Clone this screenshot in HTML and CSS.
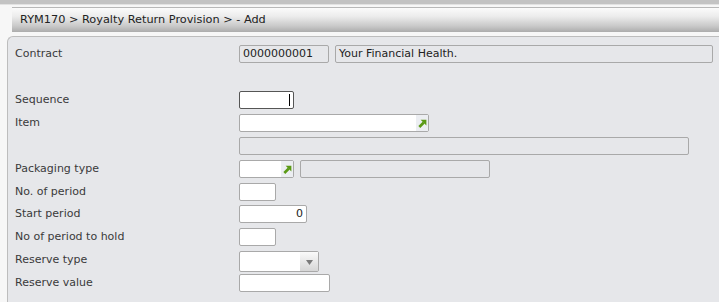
FILE: index.html
```html
<!DOCTYPE html>
<html>
<head>
<meta charset="utf-8">
<link rel="stylesheet" href="styles.css">
</head>
<body>
<div class="topstrip"></div>
<div class="headwrap">
  <div class="header">RYM170 &gt; Royalty Return Provision &gt; - Add</div>
</div>
<div class="panel">
  <div class="row">
    <div class="label">Contract</div>
    <div class="fields">
      <div class="inp dis w90">0000000001</div>
      <div class="inp dis wdesc">Your Financial Health.</div>
    </div>
  </div>
  <div class="row"></div>
  <div class="row">
    <div class="label">Sequence</div>
    <div class="fields"><div class="inp focus w55"><span class="caret"></span></div></div>
  </div>
  <div class="row">
    <div class="label">Item</div>
    <div class="fields">
      <div class="inp w190 lookup"><span class="lk"><svg width="9" height="9" viewBox="0 0 9 9"><path d="M1.3 8 L5.8 3.5" stroke="#5b9a16" stroke-width="2.6"/><path d="M2.6 0.8 H8.4 V6.6 Z" fill="#5b9a16"/></svg></span></div>
    </div>
  </div>
  <div class="row">
    <div class="label"></div>
    <div class="fields"><div class="inp dis w450"></div></div>
  </div>
  <div class="row">
    <div class="label">Packaging type</div>
    <div class="fields">
      <div class="inp w55 lookup"><span class="lk"><svg width="9" height="9" viewBox="0 0 9 9"><path d="M1.3 8 L5.8 3.5" stroke="#5b9a16" stroke-width="2.6"/><path d="M2.6 0.8 H8.4 V6.6 Z" fill="#5b9a16"/></svg></span></div>
      <div class="inp dis w190"></div>
    </div>
  </div>
  <div class="row r22">
    <div class="label">No. of period</div>
    <div class="fields"><div class="inp w37"></div></div>
  </div>
  <div class="row">
    <div class="label">Start period</div>
    <div class="fields"><div class="inp w68 num">0</div></div>
  </div>
  <div class="row">
    <div class="label">No of period to hold</div>
    <div class="fields"><div class="inp w37"></div></div>
  </div>
  <div class="row">
    <div class="label">Reserve type</div>
    <div class="fields"><div class="inp sel w80"><span class="dd"><svg width="7" height="5" viewBox="0 0 7 5"><path d="M0 0 H7 L3.5 5 Z" fill="#7a7a7a"/></svg></span></div></div>
  </div>
  <div class="row">
    <div class="label">Reserve value</div>
    <div class="fields"><div class="inp w91"></div></div>
  </div>
</div>
</body>
</html>
```

FILE: styles.css
```css
html, body {
  margin: 0;
  padding: 0;
  background: #f7f7f7;
  width: 719px;
  height: 302px;
  overflow: hidden;
  font-family: "DejaVu Sans", sans-serif;
  color: #333;
}
.topstrip {
  height: 4px;
  background: #c3c3c3;
  border-bottom: 1px solid #e2e2e2;
}
.headwrap {
  padding: 2px 0 4px 12px;
}
.header {
  height: 25px;
  box-sizing: border-box;
  border-top: 1px solid #b8b8b8;
  background: linear-gradient(#fbfbfb 0%, #ececec 35%, #c9c9c9 75%, #acacac 100%);
  font-size: 11.3px;
  line-height: 24px;
  padding-left: 8px;
  color: #222;
}
.panel {
  margin-left: 7px;
  border-top: 1px solid #bdbdbd;
  border-left: 1px solid #bdbdbd;
  border-top-left-radius: 6px;
  background: #e6e7ea;
  height: 270px;
  padding: 8px 0 0 7px;
  box-sizing: border-box;
}
.row {
  display: flex;
  height: 23px;
}
.row.r22 { height: 22px; }
.label {
  width: 224px;
  flex: none;
  font-size: 11px;
  padding-top: 2px;
  color: #3a3a3a;
}
.fields {
  display: flex;
  gap: 6px;
}
.inp {
  box-sizing: border-box;
  height: 18px;
  border: 1px solid #a9a9a9;
  border-radius: 2px;
  background: #fff;
  font-size: 11px;
  line-height: 16px;
  padding: 0 3px;
  position: relative;
  color: #222;
}
.inp.dis { background: #e6e7ea; }
.inp.focus { border-color: #555; }
.caret {
  position: absolute;
  right: 3px;
  top: 2px;
  width: 1px;
  height: 12px;
  background: #000;
}
.w90 { width: 90px; }
.wdesc { width: 378px; }
.w55 { width: 55px; }
.w190 { width: 190px; }
.w450 { width: 450px; }
.w37 { width: 37px; }
.w68 { width: 68px; }
.w80 { width: 80px; height: 21px; }
.w91 { width: 91px; }
.num { text-align: right; }
.lk {
  position: absolute;
  right: 0;
  top: 0;
  bottom: 0;
  width: 12px;
  background: #eceef2;
  display: flex;
  align-items: center;
  justify-content: center;
}
.dd {
  position: absolute;
  right: 0;
  top: 0;
  bottom: 0;
  width: 18px;
  background: linear-gradient(#fafafa, #d6d6d6);
  display: flex;
  align-items: center;
  justify-content: center;
  padding-top: 2px;
  box-sizing: border-box;
}
```
